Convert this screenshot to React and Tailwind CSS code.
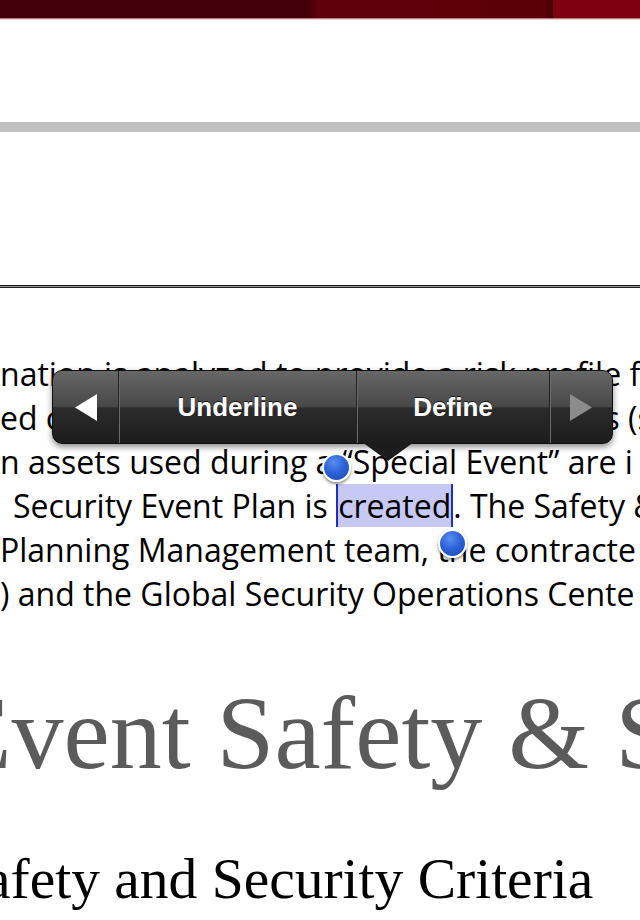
import React from 'react'

const body = { fontFamily: '"Open Sans", "Noto Sans", sans-serif' }
const serif = { fontFamily: '"Liberation Serif", "DejaVu Serif", serif' }
const sans = { fontFamily: '"Liberation Sans", Arial, sans-serif' }

function Handle({ className }) {
  return (
    <span
      className={`absolute w-[29px] h-[29px] rounded-full border-2 border-white shadow-[0_2px_3px_rgba(0,0,0,0.45)] bg-[radial-gradient(circle_at_40%_30%,#5b8ef2_0%,#2c63d8_45%,#1846b4_100%)] ${className}`}
    />
  )
}

function Toolbar() {
  return (
    <div className="absolute left-[52px] top-[370px] w-[561px] h-[74px]">
      <div
        className="flex h-full rounded-[10px] overflow-hidden border border-[#111] shadow-[0_3px_6px_rgba(0,0,0,0.45)] bg-[linear-gradient(#676767_0%,#474747_50%,#2c2c2c_51%,#1c1c1c_100%)]"
        style={sans}
      >
        <div className="w-[65px] flex items-center justify-center">
          <svg width="22" height="27" viewBox="0 0 22 27">
            <polygon points="0,13.5 22,0 22,27" fill="#fff" />
          </svg>
        </div>
        <div className="w-[238px] flex items-center justify-center border-l border-[#222] shadow-[inset_1px_0_0_#6a6a6a] text-white font-bold text-[26px] [text-shadow:0_-1px_0_rgba(0,0,0,0.7)]">
          Underline
        </div>
        <div className="w-[193px] flex items-center justify-center border-l border-[#222] shadow-[inset_1px_0_0_#6a6a6a] text-white font-bold text-[26px] [text-shadow:0_-1px_0_rgba(0,0,0,0.7)]">
          Define
        </div>
        <div className="flex-1 flex items-center justify-center border-l border-[#222] shadow-[inset_1px_0_0_#6a6a6a]">
          <svg width="22" height="27" viewBox="0 0 22 27">
            <polygon points="22,13.5 0,0 0,27" fill="#8c8c8c" />
          </svg>
        </div>
      </div>
      <svg className="absolute left-[310px] top-[72px]" width="52" height="20" viewBox="0 0 52 20">
        <polygon points="0,0 52,0 26,19" fill="#1c1c1c" />
      </svg>
    </div>
  )
}

export default function App() {
  return (
    <div className="relative w-[640px] h-[920px] overflow-hidden bg-white">
      {/* top bar */}
      <div className="flex h-[18px]">
        <div className="w-[306px] bg-[#43000a]" />
        <div className="w-[247px] bg-[linear-gradient(90deg,#3a0006_0%,#5e0009_4%,#5c0008_96%,#45000a_100%)]" />
        <div className="flex-1 bg-[#7c000d]" />
      </div>
      <div className="h-[1px] bg-[#b47c7c]" />
      <div className="h-[1px] bg-[#f3d6d6]" />

      <div className="h-[102px]" />
      <div className="h-[10px] bg-[#c0c0c0]" />
      <div className="h-[153px]" />
      <div className="h-[1px] bg-[#111]" />
      <div className="h-[1px] bg-[#9a9a9a]" />
      <div className="h-[1px] bg-[#222]" />
      <div className="h-[64px]" />

      {/* body paragraph */}
      <div className="text-[32px] leading-[44px] text-black whitespace-nowrap" style={body}>
        <div>nation is analyzed to provide a risk profile for</div>
        <div>ed or contracted by the events organizers (s</div>
        <div>n assets used during a “Special Event” are i</div>
        <div className="ml-[13px]">
          Security Event Plan is{' '}
          <span className="relative bg-[#c6c9f4] border-l-2 border-r-2 border-[#1c2fc8]">
            created
            <Handle className="left-[-16px] top-[-31px]" />
            <Handle className="right-[-16px] bottom-[-31px]" />
          </span>
          . The Safety &amp;
        </div>
        <div>Planning Management team, the contracte</div>
        <div>) and the Global Security Operations Cente</div>
      </div>

      <div className="h-[65px]" />
      <div className="ml-[-52px] text-[104px] leading-none text-[#5b5b5b] whitespace-nowrap" style={serif}>
        Event Safety &amp; Security
      </div>
      <div className="h-[65px]" />
      <div className="ml-[-47px] text-[57.5px] leading-none text-black whitespace-nowrap" style={serif}>
        Safety and Security Criteria
      </div>

      <Toolbar />
    </div>
  )
}
